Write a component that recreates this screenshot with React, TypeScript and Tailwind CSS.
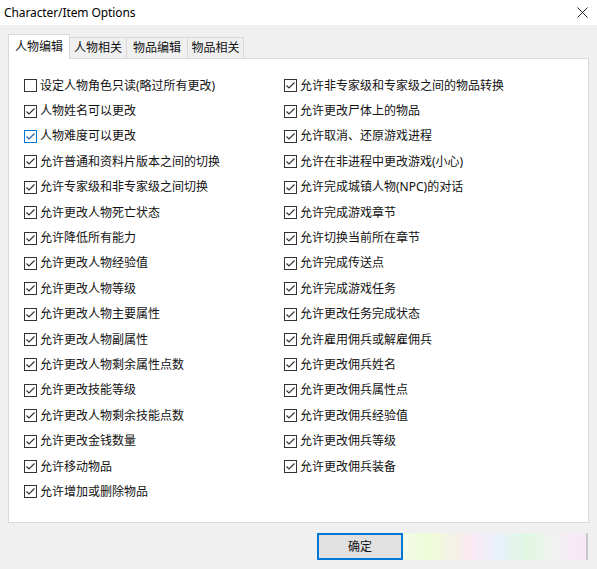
import React from 'react'

const leftItems: [string, boolean, boolean?][] = [
  ['设定人物角色只读(略过所有更改)', false],
  ['人物姓名可以更改', true],
  ['人物难度可以更改', true, true],
  ['允许普通和资料片版本之间的切换', true],
  ['允许专家级和非专家级之间切换', true],
  ['允许更改人物死亡状态', true],
  ['允许降低所有能力', true],
  ['允许更改人物经验值', true],
  ['允许更改人物等级', true],
  ['允许更改人物主要属性', true],
  ['允许更改人物副属性', true],
  ['允许更改人物剩余属性点数', true],
  ['允许更改技能等级', true],
  ['允许更改人物剩余技能点数', true],
  ['允许更改金钱数量', true],
  ['允许移动物品', true],
  ['允许增加或删除物品', true],
]

const rightItems: [string, boolean, boolean?][] = [
  ['允许非专家级和专家级之间的物品转换', true],
  ['允许更改尸体上的物品', true],
  ['允许取消、还原游戏进程', true],
  ['允许在非进程中更改游戏(小心)', true],
  ['允许完成城镇人物(NPC)的对话', true],
  ['允许完成游戏章节', true],
  ['允许切换当前所在章节', true],
  ['允许完成传送点', true],
  ['允许完成游戏任务', true],
  ['允许更改任务完成状态', true],
  ['允许雇用佣兵或解雇佣兵', true],
  ['允许更改佣兵姓名', true],
  ['允许更改佣兵属性点', true],
  ['允许更改佣兵经验值', true],
  ['允许更改佣兵等级', true],
  ['允许更改佣兵装备', true],
]

// Win10 style checkbox glyph
const CheckBox = ({ checked, hot }: { checked: boolean; hot?: boolean }) => {
  const c = hot ? '#0078d7' : '#333333'
  return (
    <svg width="13" height="13" viewBox="0 0 13 13" className="shrink-0">
      <rect x="0.5" y="0.5" width="12" height="12" fill="#fff" stroke={c} />
      {checked && (
        <path d="M2.5 6.5 L5 9 L10.5 3.5" fill="none" stroke={hot ? '#1a5fa8' : '#333333'} strokeWidth="1.2" />
      )}
    </svg>
  )
}

const Row = ({ label, checked, hot }: { label: string; checked: boolean; hot?: boolean }) => (
  <div className="flex h-[25.4px] items-center gap-[3px]">
    <CheckBox checked={checked} hot={hot} />
    <span className="text-[12px] leading-none text-[#111] whitespace-nowrap">{label}</span>
  </div>
)

const tabs = ['人物相关', '物品编辑', '物品相关']

export default function App() {
  return (
    <div
      className="w-[597px] h-[569px] bg-[#f0f0f0] flex flex-col overflow-hidden"
      style={{ fontFamily: '"Noto Sans", "Noto Sans CJK SC", sans-serif' }}
    >
      {/* title bar */}
      <div className="h-[25px] bg-white flex items-center justify-between pl-[4px] pr-[9px] shrink-0">
        <span className="text-[12px] text-black tracking-[-0.1px]">Character/Item Options</span>
        <svg width="11" height="11" viewBox="0 0 11 11">
          <path d="M0.5 0.5 L10.5 10.5 M10.5 0.5 L0.5 10.5" stroke="#222" strokeWidth="1" />
        </svg>
      </div>

      <div className="px-[8px] pt-[8px] flex flex-col">
        {/* tabs */}
        <div className="flex items-end h-[25px] relative z-10">
          <div className="h-[25px] w-[62px] bg-white border border-b-0 border-[#d9d9d9] flex items-center justify-center text-[12px] text-[#111] -mb-px">
            人物编辑
          </div>
          {tabs.map((t, i) => (
            <div
              key={t}
              className={`h-[21px] border border-b-0 border-[#d9d9d9] bg-[#f0f0f0] flex items-center justify-center text-[12px] text-[#111] ${
                i === 0 ? 'w-[57px] border-l-0' : i === 1 ? 'w-[61px] border-l-0' : 'w-[56px] border-l-0'
              }`}
            >
              {t}
            </div>
          ))}
        </div>

        {/* page */}
        <div className="h-[465px] w-[581px] bg-white border border-[#d9d9d9] pt-[14px] pl-[15px] grid grid-cols-[260px_1fr]">
          <div className="flex flex-col">
            {leftItems.map(([l, c, h]) => (
              <Row key={l} label={l} checked={c} hot={h} />
            ))}
          </div>
          <div className="flex flex-col">
            {rightItems.map(([l, c, h]) => (
              <Row key={l} label={l} checked={c} hot={h} />
            ))}
          </div>
        </div>

        {/* buttons */}
        <div className="flex justify-end mt-[10px] pr-[1px]">
          <div className="h-[27px] w-[86px] bg-[#e1e1e1] border-2 border-[#0078d7] flex items-center justify-center text-[12px] text-[#111]">
            确定
          </div>
          <div className="h-[27px] w-[185px] border-r-2 border-[#c8c8c8] bg-[linear-gradient(90deg,#f4fce6_0%,#eefbd8_15%,#fbe9f4_38%,#e8f1fb_52%,#e0f7e2_68%,#f2f2f2_82%,#f9e6f8_100%)]" />
        </div>
      </div>
    </div>
  )
}
